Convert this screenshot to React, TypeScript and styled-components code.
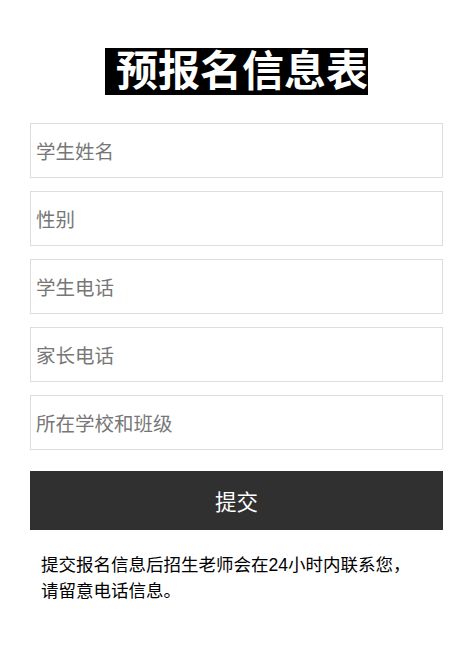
import React from 'react';
import styled, { createGlobalStyle } from 'styled-components';

// --- Global ---
const GlobalStyle = createGlobalStyle`
    html, body {
        margin: 0;
        padding: 0;
        background: #ffffff;
        font-family: "Liberation Sans", "Noto Sans CJK SC", sans-serif;
    }
    * {
        box-sizing: border-box;
    }
`;

// --- Styled Components ---
const Page = styled.div`
    padding: 48px 32px 40px 30px;
`;

const TitleRow = styled.h1`
    margin: 0 0 27px;
    text-align: center;
    font-size: 42px;
    font-weight: bold;
    line-height: 48px;
`;

const TitleMark = styled.span`
    background: #000000;
    color: #ffffff;
    padding: 0 0 0 11px;
`;

const Form = styled.form`
    display: flex;
    flex-direction: column;
    gap: 13px;
`;

const Field = styled.input`
    display: block;
    width: 100%;
    height: 55px;
    margin: 0;
    padding: 0 5px;
    border: 1px solid #dddddd;
    border-radius: 0;
    background: #ffffff;
    font-family: "Noto Sans CJK SC", sans-serif;
    font-size: 19.5px;
    color: #333333;
    outline: none;

    &::placeholder {
        color: #777777;
    }
`;

const SubmitButton = styled.button`
    display: block;
    width: 100%;
    height: 59px;
    margin-top: 8px;
    border: none;
    background: #303030;
    color: #ffffff;
    font-family: "Noto Sans CJK SC", sans-serif;
    font-size: 21.5px;
    cursor: pointer;
`;

const Note = styled.p`
    margin: 22px 0 0;
    padding: 0 28px 0 11px;
    font-size: 17.5px;
    line-height: 26px;
    color: #000000;
`;

// --- Data ---
const fields = ['学生姓名', '性别', '学生电话', '家长电话', '所在学校和班级'];

// --- Component ---
const App: React.FC = () => {
    return (
        <>
            <GlobalStyle />
            <Page>
                <TitleRow>
                    <TitleMark>预报名信息表</TitleMark>
                </TitleRow>
                <Form onSubmit={e => e.preventDefault()}>
                    {fields.map(f => (
                        <Field key={f} type="text" placeholder={f} />
                    ))}
                    <SubmitButton type="submit">提交</SubmitButton>
                </Form>
                <Note>提交报名信息后招生老师会在24小时内联系您，请留意电话信息。</Note>
            </Page>
        </>
    );
};

export default App;
